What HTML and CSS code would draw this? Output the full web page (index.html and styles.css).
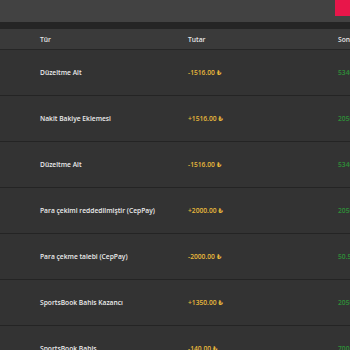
FILE: index.html
```html
<!DOCTYPE html>
<html lang="tr">
<head>
<meta charset="utf-8">
<link rel="stylesheet" href="styles.css">
</head>
<body>
<div class="topbar"><span class="topbtn"></span></div>
<div class="strip"></div>
<div class="table">
  <div class="row head">
    <div class="cell">Tür</div>
    <div class="cell">Tutar</div>
    <div class="cell">Sonraki Bakiye</div>
  </div>
  <div class="row">
    <div class="cell type">Düzeltme Alt</div>
    <div class="cell amt">-1516.00 ₺</div>
    <div class="cell bal">5340.00 ₺</div>
  </div>
  <div class="row">
    <div class="cell type">Nakit Bakiye Eklemesi</div>
    <div class="cell amt">+1516.00 ₺</div>
    <div class="cell bal">2050.00 ₺</div>
  </div>
  <div class="row">
    <div class="cell type">Düzeltme Alt</div>
    <div class="cell amt">-1516.00 ₺</div>
    <div class="cell bal">5340.00 ₺</div>
  </div>
  <div class="row">
    <div class="cell type">Para çekimi reddedilmiştir (CepPay)</div>
    <div class="cell amt">+2000.00 ₺</div>
    <div class="cell bal">2050.00 ₺</div>
  </div>
  <div class="row">
    <div class="cell type">Para çekme talebi (CepPay)</div>
    <div class="cell amt">-2000.00 ₺</div>
    <div class="cell bal">50.50 ₺</div>
  </div>
  <div class="row">
    <div class="cell type">SportsBook Bahis Kazancı</div>
    <div class="cell amt">+1350.00 ₺</div>
    <div class="cell bal">2050.00 ₺</div>
  </div>
  <div class="row">
    <div class="cell type">SportsBook Bahis</div>
    <div class="cell amt">-140.00 ₺</div>
    <div class="cell bal">700.00 ₺</div>
  </div>
</div>
</body>
</html>
```
FILE: styles.css
```css
html, body {
  margin: 0;
  padding: 0;
  background: #333333;
  font-family: "Open Sans", "DejaVu Sans", sans-serif;
  overflow: hidden;
}
.topbar {
  height: 22px;
  background: #424242;
  display: flex;
  justify-content: flex-end;
  align-items: flex-start;
}
.topbtn {
  display: block;
  width: 15px;
  height: 16px;
  background: #e8164a;
}
.strip {
  height: 7px;
  background: #252525;
}
.table {
  width: 350px;
  overflow: hidden;
}
.row {
  display: grid;
  grid-template-columns: 148px 150px 200px;
  height: 45px;
  align-items: center;
  border-bottom: 1px solid #242424;
  background: #333333;
}
.row.head {
  height: 20px;
  background: #3a3a3a;
  color: #e6e6e6;
  border-bottom: 1px solid #262626;
}
.cell {
  padding-left: 40px;
  font-size: 6.7px;
  font-weight: 600;
  white-space: nowrap;
}
.type { color: #ececec; }
.amt { color: #e9b93c; }
.bal { color: #2e9038; }
```
